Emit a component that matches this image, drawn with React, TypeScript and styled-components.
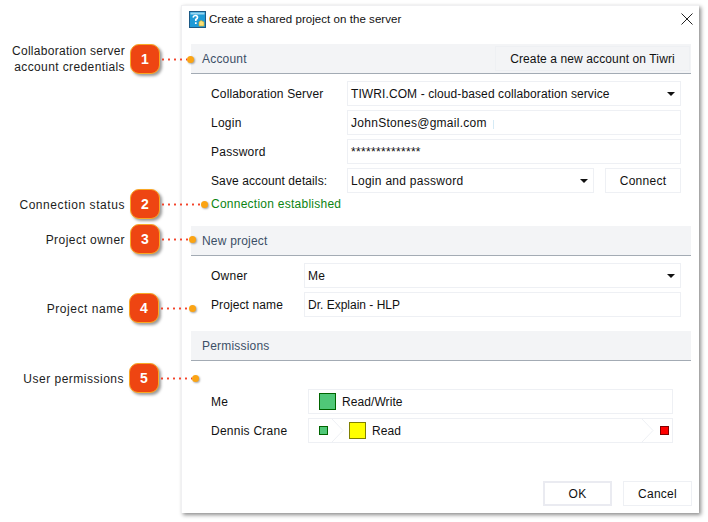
import React from "react";
import styled, { createGlobalStyle } from "styled-components";

const GlobalStyle = createGlobalStyle`
  html, body {
    margin: 0;
    padding: 0;
    background: #ffffff;
    font-family: "Liberation Sans", Arial, sans-serif;
    font-size: 12px;
    color: #111111;
  }
`;

const Page = styled.div`
  position: relative;
  width: 708px;
  height: 522px;
  overflow: hidden;
  padding: 5px 0 0 181px;
  box-sizing: border-box;
`;

const Dialog = styled.div`
  display: flex;
  flex-direction: column;
  width: 518px;
  height: 508px;
  box-sizing: border-box;
  background: #fff;
  border: 1px solid #f0f0f2;
  border-width: 1px 0 0 1px;
  box-shadow: 2px 2px 4px rgba(0, 0, 0, 0.45);
  padding: 0 8px 0 9px;
`;

const TitleBar = styled.div`
  display: flex;
  align-items: center;
  height: 38px;
  margin-left: -2px;
  padding-bottom: 12px;
  box-sizing: border-box;
`;

const TitleText = styled.span`
  margin-left: 3px;
  font-size: 11.5px;
  letter-spacing: 0.05px;
  flex: 1;
`;

const CloseButton = styled.button`
  display: flex;
  border: 0;
  background: none;
  padding: 0;
  margin-right: -2px;
`;

const SectionHeader = styled.div`
  display: flex;
  align-items: center;
  justify-content: space-between;
  height: 30px;
  box-sizing: border-box;
  background: #f3f4f6;
  border-bottom: 1px solid #a3abb4;
  padding: 0 1px 0 11px;
  color: #3c4f66;
  font-size: 12px;
  letter-spacing: 0.2px;
`;

const HeaderButton = styled.button`
  height: 25px;
  width: 195px;
  border: 1px solid #eef0f3;
  background: #f3f4f6;
  font: inherit;
  color: #111;
  letter-spacing: 0.11px;
  padding: 0;
`;

const Form = styled.div`
  display: flex;
  flex-direction: column;
  gap: 4px;
  padding: 7px 10px 0 20px;
`;

const FormRow = styled.div<{ $labelWidth: number }>`
  display: grid;
  grid-template-columns: ${(p) => p.$labelWidth}px 1fr;
  align-items: center;
  height: 25px;
`;

const Label = styled.span<{ $spacing?: number }>`
  letter-spacing: ${(p) => p.$spacing ?? 0.25}px;
`;

const Field = styled.div`
  display: flex;
  align-items: center;
  justify-content: space-between;
  height: 25px;
  box-sizing: border-box;
  border: 1px solid #eef0f4;
  padding: 0 5px 0 3px;
  background: #fff;
  min-width: 0;
`;

const LoginCaret = styled.span`
  width: 1px;
  height: 9px;
  background: #d5eaf5;
  margin: 3px 0 0 6px;
`;

const FieldText = styled.span<{ $spacing?: number }>`
  display: flex;
  align-items: center;
  flex: 1;
  letter-spacing: ${(p) => p.$spacing ?? 0.28}px;
`;

const Arrow = styled.span`
  width: 0;
  height: 0;
  border-left: 4px solid transparent;
  border-right: 4px solid transparent;
  border-top: 4px solid #111;
`;

const SaveFields = styled.div`
  display: grid;
  grid-template-columns: 247px 76px;
  justify-content: space-between;
`;

const FlatButton = styled.button<{ $default?: boolean }>`
  height: 25px;
  box-sizing: border-box;
  border: ${(p) => (p.$default ? "2px solid #eaebf1" : "1px solid #eef0f4")};
  background: #fff;
  font: inherit;
  color: #111;
  letter-spacing: 0.25px;
  padding: 0;
`;

const Status = styled.div`
  height: 33px;
  padding: 4px 0 0 20px;
  box-sizing: border-box;
  color: #0c8412;
  letter-spacing: 0.25px;
  line-height: 14px;
`;

const Gap = styled.div<{ $height: number }>`
  height: ${(p) => p.$height}px;
`;

const PermissionList = styled.div`
  display: flex;
  flex-direction: column;
  gap: 4px;
  padding: 28px 18px 0 20px;
`;

const PermissionRow = styled.div`
  display: grid;
  grid-template-columns: 97px 1fr;
  align-items: center;
  height: 25px;
`;

const PermissionCell = styled.div`
  display: flex;
  align-items: center;
  height: 25px;
  box-sizing: border-box;
  border: 1px solid #eef0f4;
  padding: 0 3px 0 10px;
  overflow: hidden;
`;

const Swatch = styled.span<{ $size: number; $fill: string; $line: string }>`
  flex: none;
  width: ${(p) => p.$size}px;
  height: ${(p) => p.$size}px;
  box-sizing: border-box;
  background: ${(p) => p.$fill};
  border: 1px solid ${(p) => p.$line};
`;

const SwatchName = styled.span`
  margin-left: 6px;
  flex: 1;
  letter-spacing: 0.08px;
`;

const Chevron = styled.svg<{ $left: number; $right: number }>`
  flex: none;
  margin: 0 ${(p) => p.$right}px 0 ${(p) => p.$left}px;
`;

const Footer = styled.div`
  display: flex;
  justify-content: flex-end;
  gap: 11px;
  margin: auto -1px 0 0;
  padding-bottom: 7px;
  button {
    width: 69px;
  }
`;

const Callout = styled.div<{ $top: number; $left: number; $width: number }>`
  position: absolute;
  top: ${(p) => p.$top}px;
  left: 0;
  display: grid;
  grid-template-columns: ${(p) => p.$left}px 30px ${(p) => p.$width}px;
  align-items: center;
  height: 30px;
`;

const CalloutLabel = styled.div<{ $spacing: number; $drop: number }>`
  text-align: right;
  padding: ${(p) => p.$drop}px 5px 0 0;
  font-size: 12px;
  line-height: 16px;
  letter-spacing: ${(p) => p.$spacing}px;
  color: #1c1c1c;
  white-space: nowrap;

  div + div {
    letter-spacing: 0.39px;
  }
`;

const Badge = styled.div`
  display: flex;
  align-items: center;
  justify-content: center;
  width: 30px;
  height: 30px;
  box-sizing: border-box;
  border-radius: 9px;
  background: #ee4512;
  border: 1px solid #f9a825;
  box-shadow: 2px 2px 3px rgba(0, 0, 0, 0.4);
  color: #fff;
  font-weight: bold;
  font-size: 14px;
`;

const Leader = styled.div`
  display: flex;
  align-items: center;
  height: 30px;
`;

const LeaderLine = styled.span`
  flex: 1;
  height: 3px;
  background: radial-gradient(circle, #f4432a 0.9px, transparent 1.3px) 0 0 / 6px 3px repeat-x;
`;

const LeaderDot = styled.span`
  flex: none;
  width: 7px;
  height: 7px;
  border-radius: 50%;
  background: #fba414;
  box-shadow: 1px 1px 2px rgba(0, 0, 0, 0.35);
`;

const callouts = [
  { n: 1, top: 43, left: 130, width: 34, spacing: 0.28, text: ["Collaboration server", "account credentials"] },
  { n: 2, top: 189, left: 130, width: 48, spacing: 0.56, text: ["Connection status"] },
  { n: 3, top: 224, left: 130, width: 36, spacing: 0.46, text: ["Project owner"] },
  { n: 4, top: 293, left: 129, width: 37, spacing: 0.55, text: ["Project name"] },
  { n: 5, top: 363, left: 129, width: 40, spacing: 0.5, text: ["User permissions"] },
];

const HelpIcon = () => (
  <svg width="17" height="17" viewBox="0 0 17 17">
    <rect x="0.5" y="0.5" width="16" height="16" fill="#1e9ad6" stroke="#1c5a86" />
    <rect x="1.5" y="1.5" width="14" height="2" fill="#9bd8f2" />
    <path d="M4 6.5 Q4.5 4.5 6.5 4.5 Q8.5 4.5 8.5 6.3 Q8.5 7.6 6.8 8.4 V10 M6.8 11.3 V13" fill="none" stroke="#fff" strokeWidth="1.7" />
    <path d="M10 15 V11 L12 9.5 L15 11 V15 Z" fill="#f9e27a" stroke="#c9a227" strokeWidth="0.6" />
  </svg>
);

const CloseIcon = () => (
  <svg width="12" height="12" viewBox="0 0 12 12">
    <path d="M0.5 0.5 L11.5 11.5 M11.5 0.5 L0.5 11.5" stroke="#222" strokeWidth="1" fill="none" />
  </svg>
);

const ChevronIcon = ({ left, right }: { left: number; right: number }) => (
  <Chevron $left={left} $right={right} width="12" height="23" viewBox="0 0 12 23">
    <path d="M0 0 L11 11.5 L0 23" fill="none" stroke="#eef0f4" />
  </Chevron>
);

const App: React.FC = () => (
  <>
    <GlobalStyle />
    <Page>
      <Dialog>
        <TitleBar>
          <HelpIcon />
          <TitleText>Create a shared project on the server</TitleText>
          <CloseButton>
            <CloseIcon />
          </CloseButton>
        </TitleBar>

        <SectionHeader>
          Account
          <HeaderButton>Create a new account on Tiwri</HeaderButton>
        </SectionHeader>
        <Form>
          <FormRow $labelWidth={136}>
            <Label $spacing={0.15}>Collaboration Server</Label>
            <Field>
              <FieldText $spacing={0.1}>TIWRI.COM - cloud-based collaboration service</FieldText>
              <Arrow />
            </Field>
          </FormRow>
          <FormRow $labelWidth={136}>
            <Label>Login</Label>
            <Field>
              <FieldText>
                JohnStones@gmail.com
                <LoginCaret />
              </FieldText>
            </Field>
          </FormRow>
          <FormRow $labelWidth={136}>
            <Label>Password</Label>
            <Field>
              <FieldText $spacing={0.32}>**************</FieldText>
            </Field>
          </FormRow>
          <FormRow $labelWidth={136}>
            <Label $spacing={0.1}>Save account details:</Label>
            <SaveFields>
              <Field>
                <FieldText>Login and password</FieldText>
                <Arrow />
              </Field>
              <FlatButton>Connect</FlatButton>
            </SaveFields>
          </FormRow>
        </Form>
        <Status>Connection established</Status>

        <SectionHeader>New project</SectionHeader>
        <Form>
          <FormRow $labelWidth={93}>
            <Label>Owner</Label>
            <Field>
              <FieldText>Me</FieldText>
              <Arrow />
            </Field>
          </FormRow>
          <FormRow $labelWidth={93}>
            <Label $spacing={0.1}>Project name</Label>
            <Field>
              <FieldText $spacing={0}>Dr. Explain - HLP</FieldText>
            </Field>
          </FormRow>
        </Form>
        <Gap $height={14} />

        <SectionHeader>Permissions</SectionHeader>
        <PermissionList>
          <PermissionRow>
            <Label>Me</Label>
            <PermissionCell>
              <Swatch $size={17} $fill="#50c878" $line="#006400" />
              <SwatchName>Read/Write</SwatchName>
            </PermissionCell>
          </PermissionRow>
          <PermissionRow>
            <Label>Dennis Crane</Label>
            <PermissionCell>
              <Swatch $size={9} $fill="#50c878" $line="#006400" />
              <ChevronIcon left={4} right={5} />
              <Swatch $size={17} $fill="#ffff00" $line="#808000" />
              <SwatchName>Read</SwatchName>
              <ChevronIcon left={0} right={6} />
              <Swatch $size={9} $fill="#ff0000" $line="#800000" />
            </PermissionCell>
          </PermissionRow>
        </PermissionList>

        <Footer>
          <FlatButton $default>OK</FlatButton>
          <FlatButton>Cancel</FlatButton>
        </Footer>
      </Dialog>

      {callouts.map((c) => (
        <Callout key={c.n} $top={c.top} $left={c.left} $width={c.width}>
          <CalloutLabel $spacing={c.spacing} $drop={c.text.length === 1 ? 2 : 0}>
            {c.text.map((line) => (
              <div key={line}>{line}</div>
            ))}
          </CalloutLabel>
          <Badge>{c.n}</Badge>
          <Leader>
            <LeaderLine />
            <LeaderDot />
          </Leader>
        </Callout>
      ))}
    </Page>
  </>
);

export default App;
